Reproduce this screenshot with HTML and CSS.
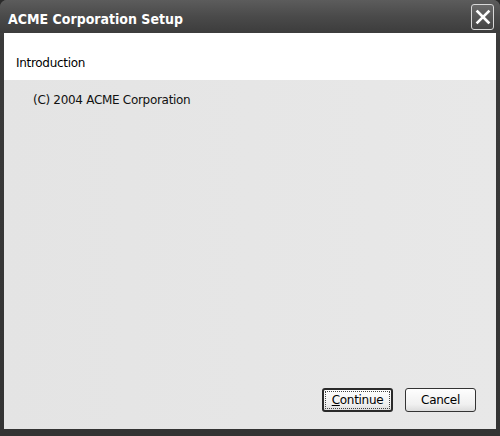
FILE: index.html
```html
<!DOCTYPE html>
<html>
<head>
<meta charset="utf-8">
<link rel="stylesheet" href="styles.css">
</head>
<body>
<div class="window">
  <div class="titlebar">
    <span class="title">ACME Corporation Setup</span>
    <div class="close">
      <svg width="16" height="16" viewBox="0 0 16 16"><path d="M2.5 2.5 L13.5 13.5 M13.5 2.5 L2.5 13.5" stroke="#fff" stroke-width="2.6" stroke-linecap="square"/></svg>
    </div>
  </div>
  <div class="client">
    <div class="header">Introduction</div>
    <div class="content">
      <p class="copy">(C) 2004 ACME Corporation</p>
      <div class="buttons">
        <button class="btn default"><span class="focus"><u>C</u>ontinue</span></button>
        <button class="btn">Cancel</button>
      </div>
    </div>
  </div>
</div>
</body>
</html>
```
FILE: styles.css
```css
html, body {
  margin: 0;
  padding: 0;
  background: #2a2a2a;
}
.window {
  width: 500px;
  height: 436px;
  box-sizing: border-box;
  background: linear-gradient(#5a5a5a, #3a3a3a 40px, #333);
  display: flex;
  flex-direction: column;
  padding: 0 4px 7px 4px;
  border-radius: 7px 7px 0 0;
  font-family: "DejaVu Sans", sans-serif;
}
.titlebar {
  height: 33px;
  display: flex;
  align-items: center;
  justify-content: space-between;
  background: linear-gradient(#5c5c5c, #4a4a4a 50%, #3c3c3c);
  margin: 0 -4px;
  padding-left: 8px;
  padding-right: 6px;
  border-radius: 7px 7px 0 0;
}
.title {
  color: #fff;
  font-family: "DejaVu Sans Condensed", "DejaVu Sans", sans-serif;
  font-stretch: condensed;
  font-weight: bold;
  font-size: 14px;
  padding-top: 4px;
}
.close {
  width: 21px;
  height: 24px;
  border: 1px solid #d8d8d8;
  border-radius: 3px;
  background: linear-gradient(#6a6a6a, #444);
  display: flex;
  align-items: center;
  justify-content: center;
  margin-top: 1px;
}
.client {
  flex: 1;
  display: flex;
  flex-direction: column;
  background: #e5e5e5;
}
.header {
  height: 47px;
  background: #fff;
  box-sizing: border-box;
  padding: 23px 0 0 12px;
  font-size: 12px;
  color: #000;
  letter-spacing: -0.3px;
}
.content {
  flex: 1;
  display: flex;
  flex-direction: column;
  background: linear-gradient(90deg, #e4e4e4, #e8e8e8);
}
.copy {
  margin: 0;
  padding: 13px 0 0 29px;
  font-size: 12px;
  letter-spacing: -0.3px;
  color: #111;
}
.buttons {
  margin-top: auto;
  display: flex;
  justify-content: flex-end;
  gap: 12px;
  padding: 0 20px 17px 0;
}
.btn {
  width: 71px;
  height: 24px;
  box-sizing: border-box;
  border: 1px solid #333;
  border-radius: 3px;
  background: linear-gradient(#fefefe, #f0f0f0 70%, #dcdcdc);
  font-family: "DejaVu Sans", sans-serif;
  font-size: 12px;
  letter-spacing: -0.3px;
  color: #000;
  padding: 0;
  display: flex;
  align-items: center;
  justify-content: center;
}
.btn.default {
  border: 2px solid #2a2a2a;
  padding: 1px;
}
.focus {
  flex: 1;
  align-self: stretch;
  display: flex;
  align-items: center;
  justify-content: center;
  border: 1px dotted #444;
}
```
